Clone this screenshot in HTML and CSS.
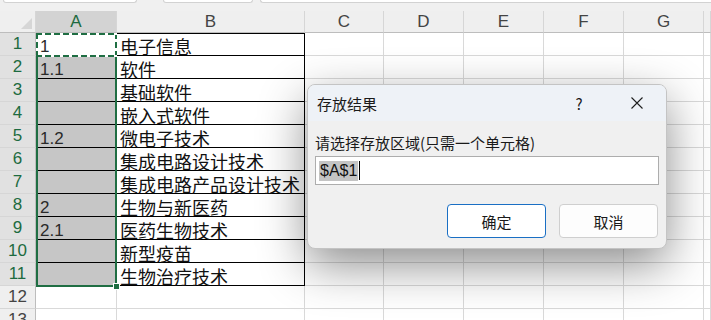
FILE: index.html
```html
<!DOCTYPE html>
<html lang="zh-CN">
<head>
    <meta charset="UTF-8">
    <title>存放结果</title>
    <link rel="stylesheet" href="styles.css">
</head>
<body>
    <div class="topbar">
        <div class="tab tab-1"></div>
        <div class="tab tab-2"></div>
        <div class="tab tab-3"></div>
    </div>

    <div class="sheet">
        <div class="grid">
            <div class="hd corner"><span class="tri"></span></div>
            <div class="hd col sel">A</div>
            <div class="hd col">B</div>
            <div class="hd col">C</div>
            <div class="hd col">D</div>
            <div class="hd col">E</div>
            <div class="hd col">F</div>
            <div class="hd col">G</div>
            <div class="hd col"></div>
        </div>
        <div id="rows"></div>

        <!-- selection A1:A11 -->
        <div class="selection"></div>
        <div class="fill-handle"></div>

        <div class="dialog">
            <div class="dlg-title">
                <span class="dlg-name">存放结果</span>
                <span class="dlg-btn">?</span>
                <span class="dlg-btn">
                    <svg width="12" height="12" viewBox="0 0 12 12"><path d="M0.5 0.5 L11.5 11.5 M11.5 0.5 L0.5 11.5" stroke="#1f1f1f" stroke-width="1.1" fill="none"/></svg>
                </span>
            </div>
            <div class="dlg-body">
                <div class="dlg-label">请选择存放区域(只需一个单元格)</div>
                <div class="dlg-input"><span class="picked">$A$1</span><span class="caret"></span></div>
                <div class="dlg-actions">
                    <button class="btn primary">确定</button>
                    <button class="btn">取消</button>
                </div>
            </div>
        </div>
    </div>

    <script>
        const colA = ['1', '1.1', '', '', '1.2', '', '', '2', '2.1', '', ''];
        const colB = ['电子信息', '软件', '基础软件', '嵌入式软件', '微电子技术', '集成电路设计技术',
            '集成电路产品设计技术', '生物与新医药', '医药生物技术', '新型疫苗', '生物治疗技术'];
        const rows = document.getElementById('rows');

        for (let r = 1; r <= 13; r++) {
            const inTable = r <= 11;
            const row = document.createElement('div');
            row.className = 'grid';
            let html = `<div class="hd rownum${inTable ? ' sel' : ''}">${r}</div>`;
            if (inTable) {
                const cls = r === 1 ? 'cell a bd active' : 'cell a bd picked-bg';
                html += `<div class="${cls}">${colA[r - 1]}</div>`;
                html += `<div class="cell b bd${r === 1 ? ' first' : ''}">${colB[r - 1]}</div>`;
            } else {
                html += '<div class="cell a"></div><div class="cell b"></div>';
            }
            for (let c = 0; c < 6; c++) html += '<div class="cell"></div>';
            row.innerHTML = html;
            rows.appendChild(row);
        }
    </script>
</body>
</html>
```

FILE: styles.css
```css
html, body { margin: 0; height: 100%; overflow: hidden; }
body { background: #fff; font-family: "Liberation Sans", "Noto Sans CJK SC", sans-serif; color: #222; }

.topbar { height: 11px; background: #f0f0f0; display: flex; gap: 26px; padding-left: 3px; box-sizing: border-box; }
.tab { height: 3px; background: #fff; border: 1px solid #d2d2d2; border-top: none; border-radius: 0 0 5px 5px; box-sizing: border-box; }
.tab-1 { width: 134px; }
.tab-2 { width: 90px; }
.tab-3 { flex: 1; margin-left: -19px; border-radius: 0 0 0 5px; border-right: none; }

.sheet { position: relative; }
.grid { display: grid; grid-template-columns: 36px 81px 188px 79px 80px 80px 80px 80px 1fr; }

.hd { background: #efefef; color: #444; font-size: 17px; text-align: center; box-sizing: border-box; }
.hd.col { height: 22px; line-height: 22px; border-right: 1px solid #d6d6d6; border-bottom: 1px solid #bdbdbd; }
.hd.col.sel { background: #d3d3d3; color: #1d6b40; }
.corner { height: 22px; position: relative; border-right: 1px solid #d6d6d6; border-bottom: 1px solid #bdbdbd; }
.tri { position: absolute; right: 3px; bottom: 3px; width: 0; height: 0; border-left: 11px solid transparent; border-bottom: 11px solid #d6d6d6; }
.hd.rownum { height: 23px; line-height: 22px; border-right: 1px solid #bdbdbd; border-bottom: 1px solid #d6d6d6; }
.hd.rownum.sel { background: #e1e1e1; color: #1d6b40; }

.cell { height: 23px; box-sizing: border-box; border-right: 1px solid #d9d9d9; border-bottom: 1px solid #d9d9d9; padding: 4px 0 0 3px; line-height: 18px; white-space: nowrap; }
.cell.a { font-size: 17px; color: #2a2a2a; padding: 5px 0 0 4px; line-height: 17px; }
.cell.b { font-family: "Noto Sans CJK SC", sans-serif; font-size: 18px; color: #111; }
.cell.bd { border-right-color: #000; border-bottom-color: #000; }
.cell.first { box-shadow: inset 0 1px 0 #000; }
.cell.picked-bg { background: #c6c6c6; }

/* marching ants round the copied cell */
.cell.active { position: relative; z-index: 2; background: #fff; }
.cell.active::after {
    content: ""; position: absolute; left: 0; top: 0; right: -1px; bottom: -2px;
    background:
        repeating-linear-gradient(90deg, #1f6e43 0 6px, #fff 6px 9px) top / 100% 2px no-repeat,
        repeating-linear-gradient(90deg, #1f6e43 0 6px, #fff 6px 9px) bottom / 100% 2px no-repeat,
        repeating-linear-gradient(180deg, #1f6e43 0 6px, #fff 6px 9px) left / 2px 100% no-repeat,
        repeating-linear-gradient(180deg, #1f6e43 0 6px, #fff 6px 9px) right / 2px 100% no-repeat;
}

.selection { position: absolute; left: 36px; top: 22px; width: 81px; height: 254px; box-sizing: border-box; border: 2px solid #1f6e43; z-index: 1; pointer-events: none; }
.fill-handle { position: absolute; left: 113px; top: 272px; width: 5px; height: 5px; background: #1f6e43; border: 1px solid #fff; z-index: 3; }

.dialog { position: absolute; left: 307px; top: 73px; width: 360px; height: 165px; box-sizing: border-box; background: #f0f0f0; border: 1px solid #c4c4c4; border-radius: 8px; box-shadow: 0 16px 48px rgba(0,0,0,0.45); z-index: 5; font-family: "Noto Sans CJK SC", sans-serif; overflow: hidden; }
.dlg-title { height: 36px; background: #eef2f7; display: flex; align-items: center; }
.dlg-name { flex: 1; padding-left: 9px; font-size: 15px; color: #1a1a1a; }
.dlg-btn { width: 58px; text-align: center; font-size: 15px; color: #1a1a1a; display: flex; justify-content: center; align-items: center; }
.dlg-body { padding: 0 7px; }
.dlg-label { font-size: 15px; color: #1a1a1a; height: 20px; line-height: 20px; margin-top: 12px; }
.dlg-input { margin-top: 3px; height: 29px; box-sizing: border-box; background: #fff; border: 1px solid #adadad; display: flex; align-items: center; padding-left: 3px; font-family: "Liberation Sans", sans-serif; font-size: 16px; color: #111; }
.picked { background: #c4c4c4; line-height: 20px; padding: 0 1px; }
.caret { width: 1px; height: 19px; background: #000; margin-left: 1px; }
.dlg-actions { display: flex; justify-content: flex-end; gap: 13px; margin-top: 19px; padding-right: 1px; }
.btn { width: 99px; height: 34px; background: #fdfdfd; border: 1px solid #cfcfcf; border-radius: 4px; font-family: "Noto Sans CJK SC", sans-serif; font-size: 15px; color: #1a1a1a; padding: 0; }
.btn.primary { border-color: #1a6fc4; background: #fff; }
```
